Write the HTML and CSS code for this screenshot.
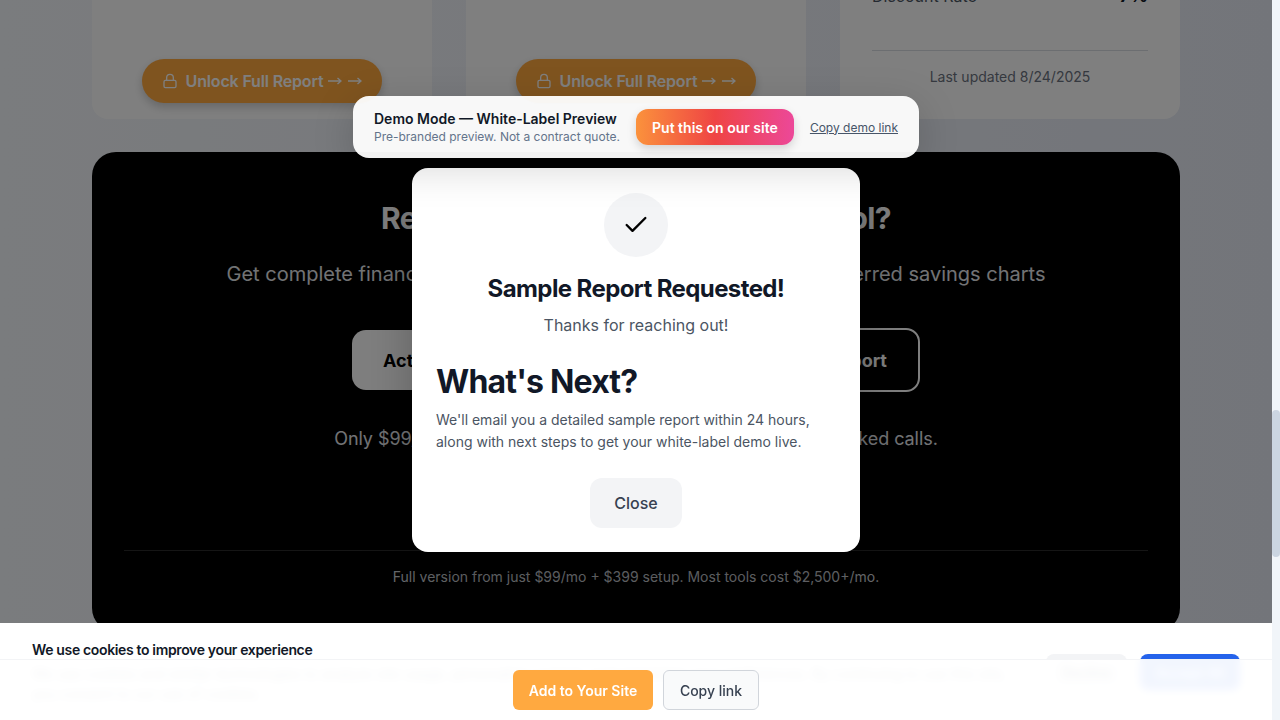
FILE: index.html
```html
<!DOCTYPE html>
<html>
  <head>
    <meta charset="UTF-8" />
    <title>White-Label Preview</title>
    <link rel="stylesheet" href="styles.css">
  </head>
  <body>
    <div class="viewport">
      <main class="page">
        <section class="cards">
          <div class="card lockedCard">
            <button class="unlock" type="button">
              <svg class="lockIcon" viewBox="0 0 24 24"><rect x="3" y="11" width="18" height="11" rx="2" /><path d="M7 11V7a5 5 0 0 1 10 0v4" /></svg>
              <span>Unlock Full Report</span>
              <span class="arrows">
                <svg class="arrowIcon" viewBox="0 0 14 8"><path d="M0 4h13M9.5 1 13 4 9.5 7" /></svg>
                <svg class="arrowIcon" viewBox="0 0 14 8"><path d="M0 4h13M9.5 1 13 4 9.5 7" /></svg>
              </span>
            </button>
          </div>
          <div class="card lockedCard">
            <button class="unlock" type="button">
              <svg class="lockIcon" viewBox="0 0 24 24"><rect x="3" y="11" width="18" height="11" rx="2" /><path d="M7 11V7a5 5 0 0 1 10 0v4" /></svg>
              <span>Unlock Full Report</span>
              <span class="arrows">
                <svg class="arrowIcon" viewBox="0 0 14 8"><path d="M0 4h13M9.5 1 13 4 9.5 7" /></svg>
                <svg class="arrowIcon" viewBox="0 0 14 8"><path d="M0 4h13M9.5 1 13 4 9.5 7" /></svg>
              </span>
            </button>
          </div>
          <div class="card summaryCard">
            <div class="summaryRow"><span>Discount Rate</span><b>7%</b></div>
            <p class="updated">Last updated 8/24/2025</p>
          </div>
        </section>

        <section class="cta">
          <h2>Ready to White-Label This ROI Tool?</h2>
          <p class="ctaLead">Get complete financing, payment and tax breakdowns plus full deferred savings charts</p>
          <div class="ctaButtons">
            <button class="ctaPrimary" type="button">Activate My White-Label</button>
            <button class="ctaGhost" type="button">Request Sample Report</button>
          </div>
          <p class="ctaPrice">Only $99/mo to add this to your own site and start getting booked calls.</p>
          <p class="ctaFoot">Full version from just $99/mo + $399 setup. Most tools cost $2,500+/mo.</p>
        </section>
      </main>

      <div class="overlay"></div>

      <div class="modal">
        <div class="checkCircle">
          <svg class="checkIcon" viewBox="0 0 24 24"><path d="M20 6 9 17l-5-5" /></svg>
        </div>
        <h3>Sample Report Requested!</h3>
        <p class="thanks">Thanks for reaching out!</p>
        <h2>What's Next?</h2>
        <p class="nextText">We'll email you a detailed sample report within 24 hours, along with next steps to get your white-label demo live.</p>
        <button class="closeBtn" type="button">Close</button>
      </div>

      <div class="demoBar">
        <div class="demoText">
          <div class="demoTitle">Demo Mode — White-Label Preview</div>
          <div class="demoSub">Pre-branded preview. Not a contract quote.</div>
        </div>
        <button class="demoCta" type="button">Put this on our site</button>
        <a class="demoLink" href="#">Copy demo link</a>
      </div>

      <div class="cookie">
        <div class="cookieText">
          <div class="cookieTitle">We use cookies to improve your experience</div>
          <p>We use cookies and similar technologies to analyze site usage, personalize content, and remember your preferences. By continuing to use this site, you consent to our use of cookies.</p>
        </div>
        <div class="cookieButtons">
          <button class="decline" type="button">Decline</button>
          <button class="accept" type="button">Accept All</button>
        </div>
      </div>

      <div class="stickyBar">
        <button class="addBtn" type="button">Add to Your Site</button>
        <button class="copyBtn" type="button">Copy link</button>
      </div>
    </div>
    <div class="scrollbar"><div class="thumb"></div></div>
  </body>
</html>
```

FILE: styles.css
```css
* {
  box-sizing: border-box;
}

html,
body {
  height: 720px;
  margin: 0;
  overflow: hidden;
}

body {
  display: flex;
  font-family: Inter, "Liberation Sans", sans-serif;
  color: #111827;
}

button {
  font-family: inherit;
  border: 0;
}

.viewport {
  position: relative;
  flex: 1;
  height: 720px;
  overflow: hidden;
}

.scrollbar {
  width: 8px;
  background-color: #f1f5f9;
}

.thumb {
  height: 147px;
  margin-top: 410px;
  background-color: #cbd5e1;
  border-radius: 4px;
}

.page {
  height: 720px;
  padding: 0 92px;
  background: linear-gradient(90deg, #f5f8fc, #e7ebf5);
}

.cards {
  display: grid;
  grid-template-columns: repeat(3, 1fr);
  gap: 34px;
  margin-top: -41px;
}

.card {
  height: 160px;
  background-color: #fff;
  border-radius: 16px;
}

.lockedCard {
  display: flex;
  align-items: flex-end;
  justify-content: center;
  padding-bottom: 16px;
}

.unlock {
  display: flex;
  align-items: center;
  gap: 8px;
  height: 44px;
  padding: 0 20px;
  background-color: #ffa83e;
  border-radius: 22px;
  color: #fff;
  font-size: 16px;
  font-weight: 600;
  letter-spacing: -0.16px;
  box-shadow: 0 4px 10px rgba(0, 0, 0, 0.2);
}

.arrows {
  display: flex;
  gap: 6px;
  margin-left: -3px;
}

.arrowIcon {
  width: 14px;
  height: 8px;
  fill: none;
  stroke: #fff;
  stroke-width: 1.4;
}

.lockIcon {
  width: 16px;
  height: 16px;
  fill: none;
  stroke: #fff;
  stroke-width: 2;
  stroke-linecap: round;
  stroke-linejoin: round;
}

.summaryCard {
  padding: 25px 32px 0;
}

.summaryRow {
  display: flex;
  justify-content: space-between;
  padding-bottom: 42px;
  border-bottom: 1px solid #d9dde3;
  color: #4b5563;
  font-size: 16px;
  line-height: 24px;
}

.summaryRow b {
  color: #111827;
  font-size: 18px;
}

.updated {
  margin: 16px 0 0;
  color: #6b7280;
  font-size: 14px;
  line-height: 20px;
  text-align: center;
}

.cta {
  height: 480px;
  margin-top: 33px;
  padding: 48px 32px 0;
  background-color: #000;
  border-radius: 24px;
  color: #fff;
  text-align: center;
}

.cta h2 {
  margin: 0;
  font-size: 30px;
  font-weight: 700;
  line-height: 36px;
  letter-spacing: -0.6px;
}

.ctaLead {
  margin: 24px 0 0;
  font-size: 20px;
  line-height: 28px;
  color: #e5e7eb;
}

.ctaButtons {
  display: flex;
  align-items: center;
  justify-content: center;
  gap: 16px;
  margin-top: 40px;
}

.ctaPrimary,
.ctaGhost {
  padding: 0 31.5px;
  border-radius: 14px;
  font-size: 18px;
  font-weight: 700;
}

.ctaPrimary {
  height: 60px;
  background-color: #fff;
  color: #000;
}

.ctaGhost {
  height: 64px;
  background-color: transparent;
  border: 2px solid #fff;
  color: #fff;
}

.ctaPrice {
  margin: 33px 0 0;
  font-size: 18px;
  line-height: 28px;
  letter-spacing: -0.06px;
  color: #e5e7eb;
}

.ctaFoot {
  margin: 97px 0 0;
  padding-top: 16px;
  border-top: 1px solid #2a2a2a;
  font-size: 14px;
  line-height: 20px;
  color: #d1d5db;
}

.overlay {
  position: absolute;
  inset: 0;
  background-color: rgba(0, 0, 0, 0.5);
}

.demoBar {
  position: absolute;
  top: 96px;
  left: 353px;
  display: flex;
  align-items: center;
  width: 566px;
  height: 62px;
  padding: 0 21px;
  background-color: rgba(255, 255, 255, 0.95);
  border-radius: 16px;
  box-shadow: 0 10px 40px rgba(0, 0, 0, 0.17);
}

.demoText {
  width: 262px;
  padding-top: 2px;
}

.demoTitle {
  font-size: 14px;
  font-weight: 600;
  line-height: 18px;
  color: #111827;
}

.demoSub {
  font-size: 12px;
  line-height: 18px;
  color: #64748b;
}

.demoCta {
  width: 158px;
  height: 36px;
  background: linear-gradient(90deg, #fb923c, #ef4444, #ec4899);
  border-radius: 12px;
  color: #fff;
  font-size: 14px;
  font-weight: 600;
  box-shadow: 0 4px 10px rgba(0, 0, 0, 0.15);
}

.demoLink {
  margin-left: 16px;
  color: #475569;
  font-size: 12px;
}

.modal {
  position: absolute;
  top: 168px;
  left: 412px;
  width: 448px;
  height: 384px;
  padding: 25px 24px 0;
  background-color: #fff;
  border-radius: 16px;
  text-align: center;
  box-shadow: 0 25px 50px rgba(0, 0, 0, 0.25);
}

.checkCircle {
  display: flex;
  align-items: center;
  justify-content: center;
  width: 64px;
  height: 64px;
  margin: 0 auto;
  background-color: #f3f4f6;
  border-radius: 50%;
}

.checkIcon {
  width: 28px;
  height: 28px;
  fill: none;
  stroke: #000;
  stroke-width: 2;
  stroke-linecap: round;
  stroke-linejoin: round;
}

.modal h3 {
  margin: 16px 0 0;
  font-size: 24px;
  font-weight: 700;
  line-height: 32px;
  letter-spacing: -0.6px;
}

.thanks {
  margin: 8px 0 0;
  color: #4b5563;
  font-size: 16px;
  line-height: 24px;
}

.modal h2 {
  margin: 25px 0 0;
  font-size: 32px;
  font-weight: 700;
  line-height: 40px;
  letter-spacing: -0.8px;
  text-align: left;
}

.nextText {
  margin: 7px 0 0;
  color: #4b5563;
  font-size: 14px;
  line-height: 22px;
  text-align: left;
}

.closeBtn {
  width: 92px;
  height: 50px;
  margin-top: 25px;
  background-color: #f3f4f6;
  border-radius: 12px;
  color: #374151;
  font-size: 16px;
  font-weight: 500;
}

.cookie {
  position: absolute;
  left: 0;
  right: 0;
  bottom: 0;
  display: flex;
  justify-content: space-between;
  height: 97px;
  padding: 17px 32px 0;
  background-color: #fff;
}

.cookieText {
  width: 990px;
}

.cookieTitle {
  font-size: 14px;
  font-weight: 600;
  line-height: 20px;
  letter-spacing: -0.35px;
  color: #111827;
}

.cookieText p {
  margin: 4px 0 0;
  font-size: 14px;
  line-height: 20px;
  color: #4b5563;
}

.cookieButtons {
  display: flex;
  gap: 13px;
  margin-top: 14px;
}

.decline,
.accept {
  height: 36px;
  border-radius: 8px;
  font-size: 14px;
  font-weight: 500;
}

.decline {
  width: 81px;
  background-color: #f3f4f6;
  color: #374151;
}

.accept {
  width: 100px;
  background-color: #2563eb;
  color: #fff;
}

.stickyBar {
  position: absolute;
  left: 0;
  right: 0;
  bottom: 0;
  display: flex;
  justify-content: center;
  gap: 10px;
  height: 61px;
  padding-top: 10px;
  background-color: rgba(255, 255, 255, 0.94);
  border-top: 1px solid #f3f4f6;
  backdrop-filter: blur(4px);
}

.addBtn,
.copyBtn {
  height: 40px;
  border-radius: 6px;
  font-size: 14px;
  font-weight: 600;
}

.addBtn {
  width: 140px;
  background-color: #ffa940;
  color: #fff;
}

.copyBtn {
  width: 96px;
  background-color: #f9fafb;
  border: 1px solid #d1d5db;
  color: #374151;
  font-weight: 500;
}
```
